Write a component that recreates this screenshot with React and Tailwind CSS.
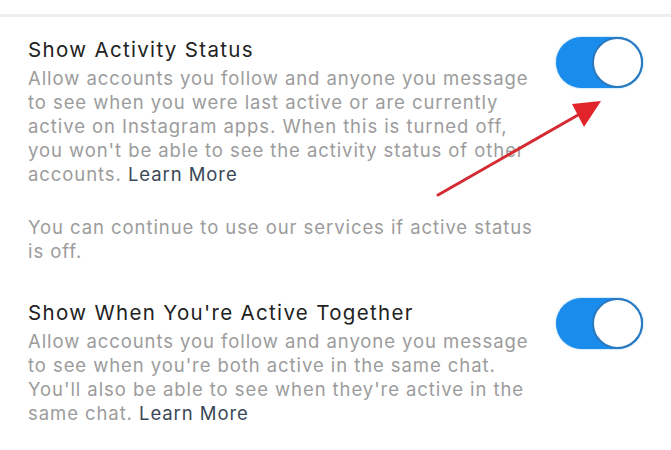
import React from "react";

const Toggle = () => (
  <div className="relative h-[51px] w-[87px] shrink-0 rounded-full bg-[#1a8cec] shadow-[0_0_2px_rgba(26,140,236,0.6)]">
    <div className="absolute right-0 top-0 h-[51px] w-[51px] rounded-full border-2 border-[#2a78bd] bg-white" />
  </div>
);

const SettingRow = ({ title, lines, toggleClass }) => (
  <div className="flex items-start justify-between">
    <div>
      <div className="whitespace-nowrap text-[20.5px] leading-[26px] tracking-[0.065em] text-[#222222]">{title}</div>
      <div className="mt-[3px] whitespace-nowrap text-[18.5px] leading-[24px] tracking-[0.05em] text-[#9c9c9c]">
        {lines.map((l, i) => (
          <div key={i}>{l}</div>
        ))}
      </div>
    </div>
    <div className={toggleClass}>
      <Toggle />
    </div>
  </div>
);

const LearnMore = () => <span className="text-[#3a4757]">Learn More</span>;

const App = () => {
  return (
    <div className="relative h-[450px] w-[671px] overflow-hidden bg-white font-['Inter',sans-serif]">
      <div className="h-[14px] bg-white" />
      <div className="h-[3px] bg-[#ededed]" />
      <div className="pl-[28px] pr-[28px] pt-[20px]">
        <SettingRow
          title="Show Activity Status"
          toggleClass="mt-0"
          lines={[
            "Allow accounts you follow and anyone you message",
            "to see when you were last active or are currently",
            "active on Instagram apps. When this is turned off,",
            "you won't be able to see the activity status of other",
            <>accounts. <LearnMore /></>,
          ]}
        />
        <div className="mt-[30px] whitespace-nowrap text-[18.5px] leading-[23.5px] tracking-[0.05em] text-[#9c9c9c]">
          <div>You can continue to use our services if active status</div>
          <div>is off.</div>
        </div>
        <div className="mt-[37px]">
          <SettingRow
            title="Show When You're Active Together"
            toggleClass="-mt-[2px]"
            lines={[
              "Allow accounts you follow and anyone you message",
              "to see when you're both active in the same chat.",
              "You'll also be able to see when they're active in the",
              <>same chat. <LearnMore /></>,
            ]}
          />
        </div>
      </div>
      {/* red arrow annotation */}
      <svg className="absolute left-0 top-0" width="671" height="450" viewBox="0 0 671 450">
        <line x1="438" y1="195" x2="585" y2="111" stroke="#d42a32" strokeWidth="3" strokeLinecap="round" />
        <polygon points="572,104 601,101 584,127" fill="#e0242a" />
      </svg>
    </div>
  );
};

export default App;
